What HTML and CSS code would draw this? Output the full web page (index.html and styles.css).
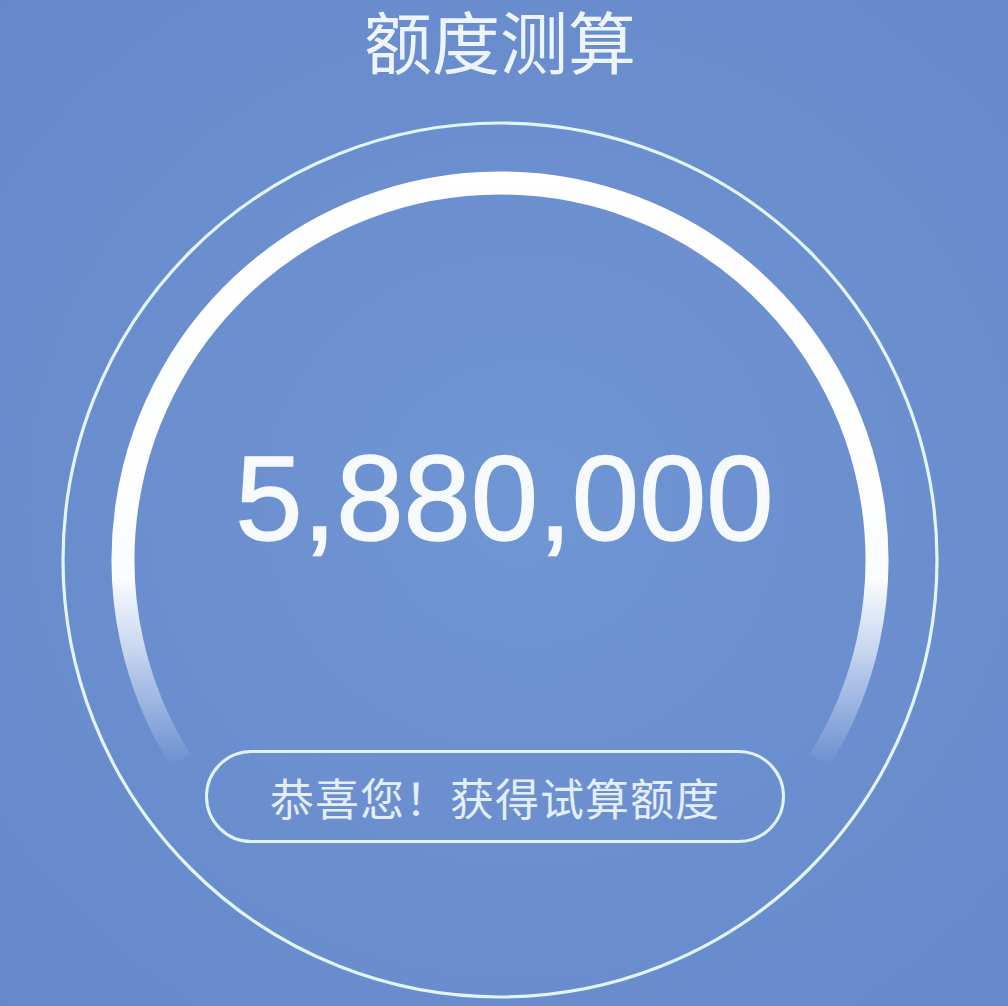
FILE: index.html
```html
<!DOCTYPE html>
<html lang="zh-CN">
<head>
<meta charset="utf-8">
<title>额度测算</title>
<link rel="stylesheet" href="styles.css">
</head>
<body>
<main class="page">
  <h1 class="title">额度测算</h1>
  <section class="gauge">
    <svg class="gauge-art" viewBox="0 0 880 880" width="880" height="880" aria-hidden="true">
      <defs>
        <linearGradient id="arcFade" gradientUnits="userSpaceOnUse" x1="0" y1="0" x2="0" y2="880">
          <stop offset="0" stop-color="#ffffff" stop-opacity="1"/>
          <stop offset="0.52" stop-color="#ffffff" stop-opacity="0.98"/>
          <stop offset="0.60" stop-color="#f2f6ff" stop-opacity="0.7"/>
          <stop offset="0.67" stop-color="#eaf0ff" stop-opacity="0.35"/>
          <stop offset="0.73" stop-color="#e6eeff" stop-opacity="0.03"/>
        </linearGradient>
      </defs>
      <circle cx="440" cy="440" r="437" fill="none" stroke="#e1f5fb" stroke-width="3.2"/>
      <path d="M120.3 639.8 A377 377 0 1 1 759.7 639.8" fill="none" stroke="url(#arcFade)" stroke-width="23"/>
    </svg>
    <div class="gauge-content">
      <div class="amount">5,880,000</div>
      <div class="pill">恭喜您！获得试算额度</div>
    </div>
  </section>
</main>
</body>
</html>
```
FILE: styles.css
```css
html, body {
  margin: 0;
  padding: 0;
}
body {
  width: 1008px;
  height: 1006px;
  overflow: hidden;
  background: radial-gradient(ellipse at 52% 50%, #7196d4 0%, #6b8fcf 45%, #6589ca 100%);
  font-family: "Noto Sans CJK SC", "Noto Sans", sans-serif;
}
.page {
  width: 1000px;
  display: flex;
  flex-direction: column;
  align-items: center;
}
.title {
  margin: 0;
  padding-top: 0;
  line-height: 80px;
  font-size: 68px;
  font-weight: 400;
  color: #eef4fb;
}
.gauge {
  position: relative;
  width: 880px;
  height: 880px;
  margin-top: 40px;
}
.gauge-art {
  position: absolute;
  left: 0;
  top: 0;
}
.gauge-content {
  position: relative;
  display: flex;
  flex-direction: column;
  align-items: center;
  padding-top: 318px;
}
.amount {
  font-family: "Liberation Sans", Arial, sans-serif;
  font-size: 121px;
  line-height: 120px;
  height: 120px;
  color: #f7fafd;
  -webkit-text-stroke: 1.5px #f7fafd;
  padding-left: 9px;
}
.pill {
  margin-top: 192px;
  margin-right: 10px;
  box-sizing: border-box;
  width: 580px;
  height: 93px;
  border: 3px solid #e0f3fa;
  border-radius: 47px;
  display: flex;
  align-items: center;
  justify-content: center;
  font-size: 44px;
  color: #e4eef9;
  letter-spacing: 1px;
}
```
